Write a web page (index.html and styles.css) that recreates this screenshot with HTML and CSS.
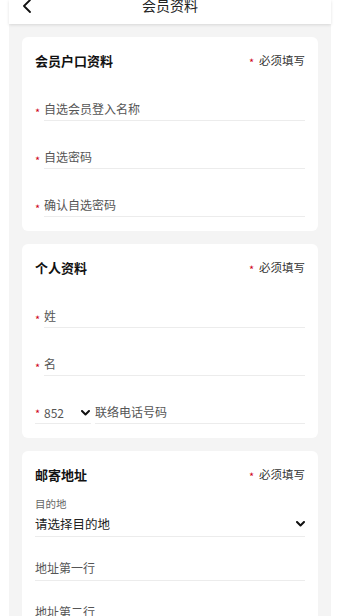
FILE: index.html
```html
<!DOCTYPE html>
<html lang="zh-CN">
<head>
<meta charset="utf-8">
<title>会员资料</title>
<link rel="stylesheet" href="styles.css">
</head>
<body>
<div class="page">
  <header class="header">
    <svg class="back" width="10" height="14" viewBox="0 0 10 14"><polyline points="8,1 2,7 8,13" fill="none" stroke="#111" stroke-width="1.8" stroke-linecap="round" stroke-linejoin="round"/></svg>
    <div class="header-title">会员资料</div>
  </header>
  <main class="content">
    <section class="card">
      <div class="card-head">
        <div class="card-title">会员户口资料</div>
        <div class="req"><span class="star">*</span>必须填写</div>
      </div>
      <div class="field"><span class="star">*</span><div class="input">自选会员登入名称</div></div>
      <div class="field"><span class="star">*</span><div class="input">自选密码</div></div>
      <div class="field"><span class="star">*</span><div class="input">确认自选密码</div></div>
    </section>
    <section class="card">
      <div class="card-head">
        <div class="card-title">个人资料</div>
        <div class="req"><span class="star">*</span>必须填写</div>
      </div>
      <div class="field"><span class="star">*</span><div class="input">姓</div></div>
      <div class="field"><span class="star">*</span><div class="input">名</div></div>
      <div class="field phone">
        <div class="code"><span class="star">*</span><span class="code-num">852</span><svg class="chev" width="9" height="6" viewBox="0 0 9 6"><polyline points="1,1 4.5,4.5 8,1" fill="none" stroke="#111" stroke-width="2" stroke-linecap="round" stroke-linejoin="round"/></svg></div>
        <div class="input">联络电话号码</div>
      </div>
    </section>
    <section class="card">
      <div class="card-head">
        <div class="card-title">邮寄地址</div>
        <div class="req"><span class="star">*</span>必须填写</div>
      </div>
      <div class="select">
        <div class="select-label">目的地</div>
        <div class="select-row"><span>请选择目的地</span><svg class="chev" width="9" height="6" viewBox="0 0 9 6"><polyline points="1,1 4.5,4.5 8,1" fill="none" stroke="#111" stroke-width="2" stroke-linecap="round" stroke-linejoin="round"/></svg></div>
      </div>
      <div class="addr">地址第一行</div>
      <div class="addr">地址第二行</div>
    </section>
  </main>
</div>
</body>
</html>
```

FILE: styles.css
```css
html, body {
  margin: 0;
  padding: 0;
  background: #ffffff;
  font-family: "Noto Sans CJK SC", "Noto Sans", sans-serif;
}
.page {
  margin: 0 9px;
  background: #f4f4f4;
  min-height: 616px;
}
.header {
  height: 24px;
  background: #ffffff;
  box-shadow: 0 1px 3px rgba(0, 0, 0, 0.12);
  display: flex;
  align-items: flex-start;
  justify-content: center;
  position: relative;
}
.back {
  position: absolute;
  left: 13px;
  top: -1px;
}
.header-title {
  font-size: 14px;
  line-height: 14px;
  margin-top: -2px;
  color: #222;
}
.content {
  padding: 13px 13px 0;
  display: flex;
  flex-direction: column;
  gap: 13px;
}
.card {
  background: #ffffff;
  border-radius: 6px;
  padding: 13px 13px 14px;
}
.card-head {
  display: flex;
  justify-content: space-between;
  align-items: center;
  height: 20px;
  margin-bottom: 3px;
}
.card-title {
  font-size: 13px;
  font-weight: 700;
  color: #111;
}
.req {
  font-size: 11.5px;
  color: #333;
  display: flex;
  align-items: center;
}
.req .star {
  width: 10px;
}
.star {
  color: #d0021b;
  font-size: 11px;
  width: 9px;
  flex: none;
  padding-top: 4px;
  line-height: 12px;
}
.field {
  display: flex;
  align-items: flex-end;
  padding-top: 26px;
}
.field .star {
  padding-bottom: 3px;
}
.input {
  flex: 1;
  font-size: 12px;
  line-height: 20px;
  color: #555;
  padding-bottom: 1px;
  border-bottom: 1px solid #ececec;
}
.phone {
  gap: 4px;
}
.code {
  width: 56px;
  display: flex;
  align-items: center;
  border-bottom: 1px solid #ececec;
  height: 21px;
  font-size: 12px;
  color: #555;
}
.code .star {
  padding-top: 3px;
}
.code-num {
  flex: 1;
}
.code .chev {
  margin-right: 1px;
}
.select {
  padding-top: 9px;
  border-bottom: 1px solid #ececec;
  padding-bottom: 2px;
}
.select-label {
  font-size: 10.5px;
  line-height: 16px;
  color: #666;
}
.select-row {
  margin-top: 2px;
  display: flex;
  justify-content: space-between;
  align-items: center;
  font-size: 12.5px;
  line-height: 20px;
  color: #222;
}
.addr {
  margin-top: 21px;
  font-size: 12px;
  line-height: 20px;
  color: #555;
  padding-bottom: 2px;
  border-bottom: 1px solid #ececec;
}
```
